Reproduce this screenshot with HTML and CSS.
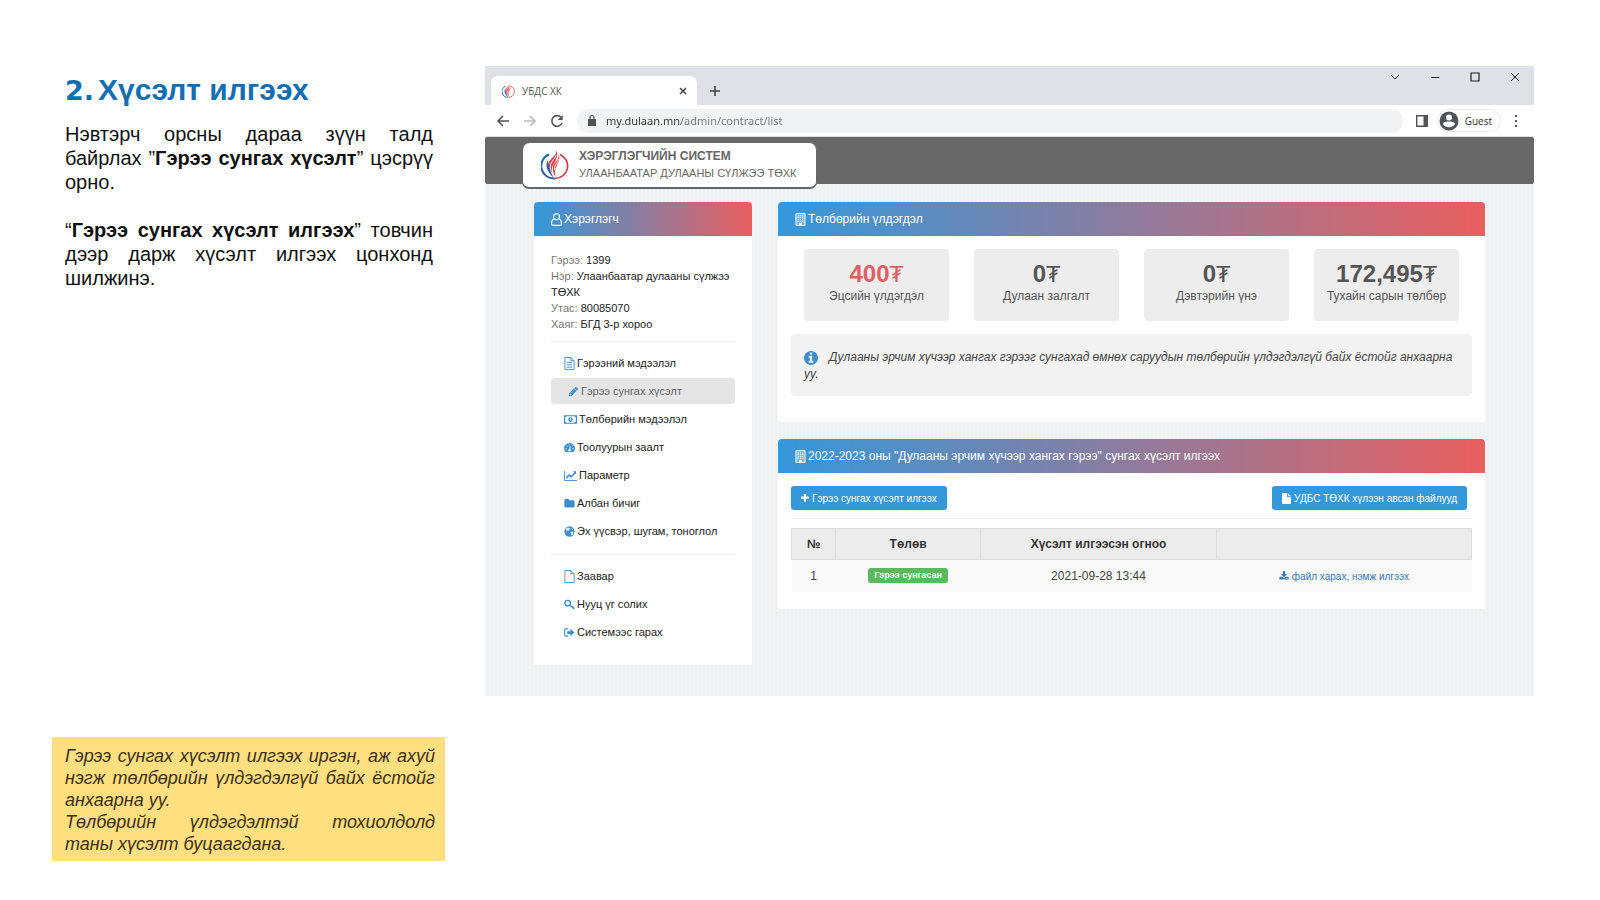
FILE: index.html
```html
<!DOCTYPE html>
<html lang="mn">
<head>
<meta charset="utf-8">
<meta name="viewport" content="width=device-width, initial-scale=1">
<title>Хүсэлт илгээх</title>
<link rel="stylesheet" href="styles.css">
</head>
<body>
<svg class="defs" width="0" height="0" aria-hidden="true">
  <symbol id="flame" viewBox="0 0 28 30">
    <path d="M8 4.500A12.500 12.500 0 0 0 14 28.500" fill="none" stroke="#2566a8" stroke-width="2"/>
    <path d="M19 4.500A12.500 12.500 0 0 1 14 28.500" fill="none" stroke="#d8343f" stroke-width="1.600"/>
    <path d="M15.500 0C16 6 8 8 7 15c-.6 5 2 9 5 12-2-8-1-11 2-15 2-4 3-8 1.500-12z" fill="#e0444d"/>
    <path d="M18 4c0 6-5 8-6 13-.6 4 .5 7 2.500 10-1-6 0-9 2-13 1.500-3 2.500-6 1.500-10z" fill="#e0444d"/>
    <path d="M7 10c-3 4-2 11 6 18-2-4-3-7-4-10-1-3-2-4-2-8z" fill="#2566a8"/>
    <path d="M15 5C14 10 8 12 9.500 19c.5 3 2 6 3.500 8M17.500 9c-1 4-4.500 6-4 11" fill="none" stroke="#fff" stroke-width=".9"/>
  </symbol>
  <symbol id="building" viewBox="0 0 12 14">
    <path d="M1 .5h10v13H1z" fill="currentColor" fill-opacity=".35" stroke="currentColor"/>
    <path d="M3 3h6M3 5h6M3 7h6M3 9h6" stroke="currentColor" stroke-dasharray="1.200 1.200"/>
    <path d="M4.500 11h3v2.500h-3z" fill="currentColor"/>
  </symbol>
  <symbol id="file" viewBox="0 0 12 14">
    <path d="M1 .5h6.500L11 4v9.500H1zM7.500.5V4H11" fill="none" stroke="currentColor"/>
  </symbol>
</svg>

<main class="slide">
  <section class="notes">
    <div class="lesson">
      <h1><span class="num">2.</span><span>Хүсэлт илгээх</span></h1>
      <p>Нэвтэрч орсны дараа зүүн талд байрлах ”<b>Гэрээ сунгах хүсэлт</b>” цэсрүү орно.</p>
      <p>“<b>Гэрээ сунгах хүсэлт илгээх</b>” товчин дээр дарж хүсэлт илгээх цонхонд шилжинэ.</p>
    </div>
    <aside class="callout">
      <p>Гэрээ сунгах хүсэлт илгээх иргэн, аж ахуй нэгж төлбөрийн үлдэгдэлгүй байх ёстойг анхаарна уу.</p>
      <p>Төлбөрийн үлдэгдэлтэй тохиолдолд таны&nbsp;хүсэлт буцаагдана.</p>
    </aside>
  </section>

  <section class="browser">
    <div class="tabstrip">
      <div class="tab">
        <svg class="favicon" viewBox="0 0 28 30" aria-hidden="true"><use href="#flame"/></svg>
        <span class="tab-title">УБДС ХК</span>
        <button class="plain" type="button" aria-label="Close tab"><svg width="8" height="8" viewBox="0 0 8 8"><path d="M1 1l6 6M7 1L1 7" stroke="#444" stroke-width="1.500"/></svg></button>
      </div>
      <button class="plain newtab" type="button" aria-label="New tab"><svg width="12" height="12" viewBox="0 0 12 12"><path d="M6 1v10M1 6h10" stroke="#444" stroke-width="1.600"/></svg></button>
      <div class="winctl">
        <button class="plain" type="button" aria-label="Search tabs"><svg width="10" height="10" viewBox="0 0 10 10"><path d="M1 3l4 4 4-4" fill="none" stroke="#333"/></svg></button>
        <button class="plain" type="button" aria-label="Minimize"><svg width="10" height="10" viewBox="0 0 10 10"><path d="M1 5.500h8" stroke="#222"/></svg></button>
        <button class="plain" type="button" aria-label="Maximize"><svg width="10" height="10" viewBox="0 0 10 10"><path d="M1 1h8v8H1z" fill="none" stroke="#222" stroke-width="1.200"/></svg></button>
        <button class="plain" type="button" aria-label="Close"><svg width="10" height="10" viewBox="0 0 10 10"><path d="M1 1l8 8M9 1L1 9" stroke="#222"/></svg></button>
      </div>
    </div>
    <div class="toolbar">
      <button class="plain" type="button" aria-label="Back"><svg width="14" height="14" viewBox="0 0 14 14"><path d="M13 7H2M7 2L2 7l5 5" fill="none" stroke="#505357" stroke-width="1.500"/></svg></button>
      <button class="plain" type="button" aria-label="Forward"><svg width="14" height="14" viewBox="0 0 14 14"><path d="M1 7h11M7 2l5 5-5 5" fill="none" stroke="#b8babd" stroke-width="1.500"/></svg></button>
      <button class="plain" type="button" aria-label="Reload"><svg width="14" height="14" viewBox="0 0 14 14"><path d="M12 9A5.300 5.300 0 1 1 11 3.300" fill="none" stroke="#505357" stroke-width="1.600"/><path d="M12.700 1v5H7.700z" fill="#505357"/></svg></button>
      <label class="omnibox">
        <svg width="8" height="11" viewBox="0 0 8 11" aria-hidden="true"><path d="M0 4h8v7H0z" fill="#505357"/><path d="M2 4V2.700a2 2 0 0 1 4 0V4" fill="none" stroke="#505357" stroke-width="1.200"/></svg>
        <input type="text" value="my.dulaan.mn/admin/contract/list" aria-label="Address">
      </label>
      <button class="plain" type="button" aria-label="Side panel"><svg width="12" height="12" viewBox="0 0 12 12"><path d="M.7.7h10.600v10.600H.7z" fill="none" stroke="#505357" stroke-width="1.400"/><path d="M7.500 1H11v10H7.500z" fill="#505357"/></svg></button>
      <button class="guest" type="button"><svg width="20" height="20" viewBox="0 0 20 20" aria-hidden="true"><circle cx="10" cy="10" r="9.500" fill="#505357"/><circle cx="10" cy="6.500" r="3" fill="#fff"/><path d="M4 12.500c2-2.600 10-2.600 12 0-1 5-11 5-12 0z" fill="#fff"/></svg>Guest</button>
      <button class="plain" type="button" aria-label="Menu"><svg width="4" height="12" viewBox="0 0 4 12"><path d="M1 0h2v2H1zM1 5h2v2H1zM1 10h2v2H1z" fill="#505357"/></svg></button>
    </div>

    <header class="sitebar">
      <div class="brand">
        <svg class="logo" viewBox="0 0 28 30" aria-hidden="true"><use href="#flame"/></svg>
        <div><strong>ХЭРЭГЛЭГЧИЙН СИСТЕМ</strong><span>УЛААНБААТАР ДУЛААНЫ СҮЛЖЭЭ ТӨХК</span></div>
      </div>
    </header>

    <div class="page">
      <aside class="panel">
        <h2><svg class="ico" viewBox="0 0 12 14"><circle cx="6" cy="4" r="3.200" fill="none" stroke="currentColor" stroke-width="1.200"/><path d="M3.500 6.500C1 7 .6 9 .6 11.500c0 1.500.9 1.900 2 1.900h6.800c1.100 0 2-.4 2-1.900 0-2.500-.4-4.500-2.900-5" fill="none" stroke="currentColor" stroke-width="1.200"/></svg>Хэрэглэгч</h2>
        <div class="user-body">
          <dl>
            <div><dt>Гэрээ:</dt> <dd>1399</dd></div>
            <div><dt>Нэр:</dt> <dd>Улаанбаатар дулааны сүлжээ ТӨХК</dd></div>
            <div><dt>Утас:</dt> <dd>80085070</dd></div>
            <div><dt>Хаяг:</dt> <dd>БГД 3-р хороо</dd></div>
          </dl>
          <nav>
            <a href="#info"><svg class="ico" viewBox="0 0 12 14"><use href="#file"/><path d="M3 6h6M3 8.500h6M3 11h6" stroke="currentColor"/></svg>Гэрээний мэдээлэл</a>
            <a href="#extend" class="active"><svg class="ico" viewBox="0 0 1792 1792"><path fill="currentColor" d="M491 1536l91-91-235-235-91 91v107h128v128h107zm523-928q0-22-22-22-10 0-17 7l-542 542q-7 7-7 17 0 22 22 22 10 0 17-7l542-542q7-7 7-17zm-54-192l416 416-832 832h-416v-416zm683 96q0 53-37 90l-166 166-416-416 166-165q36-38 90-38 53 0 91 38l235 234q37 39 37 91z"/></svg>Гэрээ сунгах хүсэлт</a>
            <a href="#pay"><svg class="ico wide" viewBox="0 0 14 10"><path d="M.6 1h12.800v8H.6z" fill="none" stroke="currentColor" stroke-width="1.200"/><path d="M1 1h2L1 3zM13 1h-2l2 2zM1 9h2L1 7zM13 9h-2l2-2z" fill="currentColor"/><ellipse cx="7" cy="5" rx="2.300" ry="2.800" fill="currentColor"/><path d="M6.400 3.600h.8v2.800" fill="none" stroke="#fff" stroke-width=".8"/></svg>Төлбөрийн мэдээлэл</a>
            <a href="#meter"><svg class="ico" viewBox="0 0 12 12"><path d="M1.500 11A6 6 0 1 1 10.500 11z" fill="currentColor"/><path d="M6 9.500l1-5" stroke="#fff"/><circle cx="6" cy="9" r="1.300" fill="#fff"/><path d="M1.500 7.500h1.500M9 7.500h1.500M2.700 4l1 1M8.800 4.500l.8-.8M5 3h1" stroke="#fff"/></svg>Тоолуурын заалт</a>
            <a href="#param"><svg class="ico wide" viewBox="0 0 14 12"><path d="M.6 1v10.400H14" fill="none" stroke="currentColor"/><path d="M2.500 9L5.500 5.500l2 2L12 3" fill="none" stroke="currentColor" stroke-width="1.700"/><path d="M9.500 1.500H13V5z" fill="currentColor"/></svg>Параметр</a>
            <a href="#letters"><svg class="ico" viewBox="0 0 1792 1792"><path fill="currentColor" d="M1728 608v704q0 92-66 158t-158 66h-1216q-92 0-158-66t-66-158v-960q0-92 66-158t158-66h320q92 0 158 66t66 158v32h672q92 0 158 66t66 158z"/></svg>Албан бичиг</a>
            <a href="#source"><svg class="ico" viewBox="0 0 12 12"><circle cx="6" cy="6" r="5.600" fill="currentColor"/><path d="M2 2.500l3-1 2 1.500-1.500 1L5 5.500 3.500 5 3 6.500zM7 6.500L9 6l1.500 1-1 2.500-1.500.8L7.500 8zM8 2l2 1.500L9 4.500z" fill="#fff" fill-opacity=".85"/></svg>Эх үүсвэр, шугам, тоноглол</a>
            <hr>
            <a href="#help"><svg class="ico" viewBox="0 0 12 14"><use href="#file"/></svg>Заавар</a>
            <a href="#password"><svg class="ico" viewBox="0 0 12 12"><circle cx="4" cy="4.500" r="3" fill="none" stroke="currentColor" stroke-width="1.500"/><path d="M6.300 6.500l4.700 4.300M8.200 9.600l1.600-1.700M9.700 11l1.600-1.700" fill="none" stroke="currentColor" stroke-width="1.300"/></svg>Нууц үг солих</a>
            <a href="#logout"><svg class="ico" viewBox="0 0 12 12"><path d="M4.500 2H2Q.7 2 .7 3.300v5.400Q.7 10 2 10h2.500" fill="none" stroke="currentColor" stroke-width="1.200"/><path d="M3.500 4.500H7V2l4.500 4L7 10V7.500H3.500z" fill="currentColor"/></svg>Системээс гарах</a>
          </nav>
        </div>
      </aside>

      <div class="content">
        <section class="panel">
          <h2><svg class="ico" viewBox="0 0 12 14"><use href="#building"/></svg>Төлбөрийн үлдэгдэл</h2>
          <div class="panel-body balance">
            <div class="stats">
              <div class="stat due"><b>400<i>₮</i></b><span>Эцсийн үлдэгдэл</span></div>
              <div class="stat"><b>0<i>₮</i></b><span>Дулаан залгалт</span></div>
              <div class="stat"><b>0<i>₮</i></b><span>Дэвтэрийн үнэ</span></div>
              <div class="stat"><b>172,495<i>₮</i></b><span>Тухайн сарын төлбөр</span></div>
            </div>
            <p class="notice"><svg viewBox="128 128 1536 1536" aria-hidden="true"><path fill="currentColor" d="M1152 1376v-160q0-14-9-23t-23-9h-96v-512q0-14-9-23t-23-9h-320q-14 0-23 9t-9 23v160q0 14 9 23t23 9h96v320h-96q-14 0-23 9t-9 23v160q0 14 9 23t23 9h448q14 0 23-9t9-23zm-128-896v-160q0-14-9-23t-23-9h-192q-14 0-23 9t-9 23v160q0 14 9 23t23 9h192q14 0 23-9t9-23zm640 416q0 209-103 385.500t-279.500 279.500-385.500 103-385.500-103-279.500-279.500-103-385.500 103-385.500 279.500-279.500 385.500-103 385.500 103 279.500 279.500 103 385.500z"/></svg>Дулааны эрчим хүчээр хангах гэрээг сунгахад өмнөх саруудын төлбөрийн үлдэгдэлгүй байх ёстойг анхаарна уу.</p>
          </div>
        </section>

        <section class="panel">
          <h2><svg class="ico" viewBox="0 0 12 14"><use href="#building"/></svg>2022-2023 оны "Дулааны эрчим хүчээр хангах гэрээ" сунгах хүсэлт илгээх</h2>
          <div class="panel-body">
            <div class="actions">
              <button class="btn" type="button"><svg viewBox="192 192 1408 1408" aria-hidden="true"><path fill="currentColor" d="M1600 736v192q0 40-28 68t-68 28h-416v416q0 40-28 68t-68 28h-192q-40 0-68-28t-28-68v-416h-416q-40 0-68-28t-28-68v-192q0-40 28-68t68-28h416v-416q0-40 28-68t68-28h192q40 0 68 28t28 68v416h416q40 0 68 28t28 68z"/></svg>Гэрээ сунгах хүсэлт илгээх</button>
              <button class="btn" type="button"><svg class="doc" viewBox="0 0 10 12" aria-hidden="true"><path d="M0 1q0-1 1-1h4.500v3.500q0 1 1 1H10V11q0 1-1 1H1q-1 0-1-1zM6.500 0L10 3.500H6.500z" fill="currentColor"/></svg>УДБС ТӨХК хүлээн авсан файлууд</button>
            </div>
            <table>
              <colgroup><col class="c1"><col class="c2"><col class="c3"><col></colgroup>
              <thead><tr><th>№</th><th>Төлөв</th><th>Хүсэлт илгээсэн огноо</th><th></th></tr></thead>
              <tbody><tr><td>1</td><td><span class="label">Гэрээ сунгасан</span></td><td>2021-09-28 13:44</td><td><a href="#files"><svg viewBox="0 0 1792 1600" aria-hidden="true"><path fill="currentColor" d="M1344 1344q0-26-19-45t-45-19-45 19-19 45 19 45 45 19 45-19 19-45zm256 0q0-26-19-45t-45-19-45 19-19 45 19 45 45 19 45-19 19-45zm128-224v320q0 40-28 68t-68 28h-1472q-40 0-68-28t-28-68v-320q0-40 28-68t68-28h465l135 136q58 56 136 56t136-56l136-136h464q40 0 68 28t28 68zm-325-569q17 41-14 70l-448 448q-18 19-45 19t-45-19l-448-448q-31-29-14-70 17-39 59-39h256v-448q0-26 19-45t45-19h256q26 0 45 19t19 45v448h256q42 0 59 39z"/></svg>файл харах, нэмж илгээх</a></td></tr></tbody>
            </table>
          </div>
        </section>
      </div>
    </div>
  </section>
</main>
</body>
</html>
```
FILE: styles.css
```css
* { box-sizing: border-box; }
body { margin: 0; background: #fff; color: #111; font-family: "Liberation Sans", Arial, sans-serif; }
h1, h2, p, dl, dd { margin: 0; }
button { font: inherit; cursor: pointer; }
a { text-decoration: none; }
.defs { display: none; }
.slide { display: grid; grid-template-columns: 393fr 1049fr; gap: 40px; min-height: 100vh; padding: 66px 66px 39px 52px; }

.notes { display: flex; flex-direction: column; justify-content: space-between; }
.lesson { padding: 4px 12px 0 13px; }
.lesson h1 { display: flex; align-items: baseline; gap: 4px; margin-bottom: 11px; color: #146eb4; font-size: 30px; line-height: 40px; }
.num { font-family: "DejaVu Sans", sans-serif; font-size: 27px; }
.lesson p { margin-bottom: 24px; font-size: 20px; line-height: 24px; text-align: justify; }
.callout { padding: 8px 10px 6px 13px; background: #ffdf80; color: #3c3018; font-size: 18px; font-style: italic; line-height: 22px; text-align: justify; }

.browser { align-self: start; background: #fff; }
.plain { display: inline-flex; padding: 0; border: 0; background: none; }
.tabstrip { display: flex; height: 39px; padding: 10px 14px 0 6px; background: #dee1e6; }
.tab { display: flex; align-items: center; width: 206px; padding: 0 10px 0 11px; border-radius: 7px 7px 0 0; background: #fff; }
.favicon { width: 13px; height: 14px; margin-right: 7px; }
.tab-title { flex: 1; color: #555; font: 10px "Open Sans", sans-serif; }
.newtab { align-self: center; margin-left: 12px; }
.winctl { display: flex; gap: 30px; height: 10px; margin: -4px 0 0 auto; }
.toolbar { display: flex; align-items: center; gap: 13px; height: 32px; padding: 0 16px 0 11px; border-bottom: 1px solid #ddd; }
.omnibox { display: flex; flex: 1; align-items: center; gap: 10px; height: 24px; padding: 0 11px; border-radius: 12px; background: #f1f3f4; }
.omnibox input { flex: 1; min-width: 0; padding: 0; border: 0; outline: 0; font: 11px "Noto Sans", sans-serif; color: transparent; background: linear-gradient(90deg, #333 75px, #75787c 75px); -webkit-background-clip: text; background-clip: text; }
.guest { display: flex; align-items: center; gap: 6px; height: 23px; margin-left: -4px; padding: 0 8px 0 1px; border: 1px solid #e8e8e8; border-radius: 12px; background: #fff; color: #333; font: 10px "Open Sans", sans-serif; }

.sitebar { height: 47px; padding: 6px 37px 0; border-radius: 2px; background: #676767; }
.brand { position: relative; z-index: 1; display: inline-flex; align-items: center; gap: 10px; height: 46px; padding: 0 19px 0 18px; border: 1px solid #666; border-width: 0 1px 2px; border-radius: 7px; background: #fff; color: #666; font-size: 11px; }
.logo { width: 28px; height: 30px; }
.brand strong, .brand span { display: block; line-height: 17px; }
.brand strong { font-size: 12px; }

.page { display: grid; grid-template-columns: 218fr 707fr; align-items: start; gap: 26px; padding: 18px 49px 31px; background: repeating-linear-gradient(90deg, #f3f4f6 0 2px, #eef0f2 2px 4px); }
.panel { border-radius: 4px 4px 0 0; background: #fff; overflow: hidden; }
.panel h2 { display: flex; align-items: center; height: 34px; padding: 0 17px; background: linear-gradient(90deg, #3498db, #e95f5f); color: #fff; font-size: 12px; font-weight: 400; }
.ico { flex: none; width: 11px; height: 13px; margin-right: 2px; }
.ico.wide { width: 13px; }
.user-body { padding: 16px 17px 18px; font-size: 11px; }
dl { padding-bottom: 9px; border-bottom: 1px solid #eee; line-height: 16px; }
dt, dd { display: inline; }
dt { color: #777; }
dd { color: #222; }
nav { padding-top: 8px; }
nav a { display: flex; align-items: center; height: 26px; margin-bottom: 2px; padding: 0 13px; color: #222; }
nav .ico { color: #3b8fd0; }
nav .active { padding-left: 17px; border-radius: 4px; background: #e5e5e5; color: #666; }
nav hr { margin: 10px 0 8px; border: 0; border-top: 1px solid #eee; }

.content { display: grid; gap: 17px; min-width: 0; }
.panel-body { padding: 13px 13px 17px; }
.balance { padding-bottom: 26px; }
.stats { display: grid; grid-template-columns: repeat(4, 1fr); gap: 25px; padding: 0 13px; }
.stat { height: 72px; padding-top: 12px; border-radius: 4px; background: #ededed; color: #555; text-align: center; }
.stat b { display: block; font-size: 24px; line-height: 26px; }
.stat i { font-family: "DejaVu Sans", sans-serif; font-size: 22px; font-style: normal; font-weight: 400; }
.stat span { display: block; font-size: 12px; line-height: 16px; }
.due b { color: #e35d63; }
.notice { margin-top: 13px; padding: 15px 13px 13px; border-radius: 4px; background: #f2f2f2; color: #444; font-size: 12px; font-style: italic; line-height: 17px; }
.notice svg { width: 14px; height: 14px; margin-right: 11px; color: #3b8fd0; vertical-align: middle; }
.actions { display: flex; justify-content: space-between; margin-bottom: 9px; padding: 0 5px 8px 0; border-bottom: 1px solid #eee; }
.btn { display: flex; align-items: center; gap: 3px; height: 24px; padding: 0 10px; border: 0; border-radius: 3px; background: #3498db; color: #fff; font-size: 10px; }
.btn svg { width: 8px; height: 8px; }
.btn .doc { width: 9px; height: 11px; }
table { width: 100%; border-collapse: collapse; table-layout: fixed; color: #444; font-size: 12px; text-align: center; }
.c1 { width: 6.5%; }
.c2 { width: 21.3%; }
.c3 { width: 34.7%; }
th { height: 31px; padding: 0; border: 1px solid #ddd; background: #ececec; color: #333; }
td { height: 32px; padding: 0; background: #f9f9f9; }
.label { display: inline-block; padding: 0 6px; border-radius: 3px; background: #5cb85c; color: #fff; font-size: 9px; font-weight: 700; line-height: 15px; vertical-align: middle; }
td a { color: #337ab7; font-size: 10px; }
td svg { width: 10px; height: 9px; margin-right: 3px; }
```
